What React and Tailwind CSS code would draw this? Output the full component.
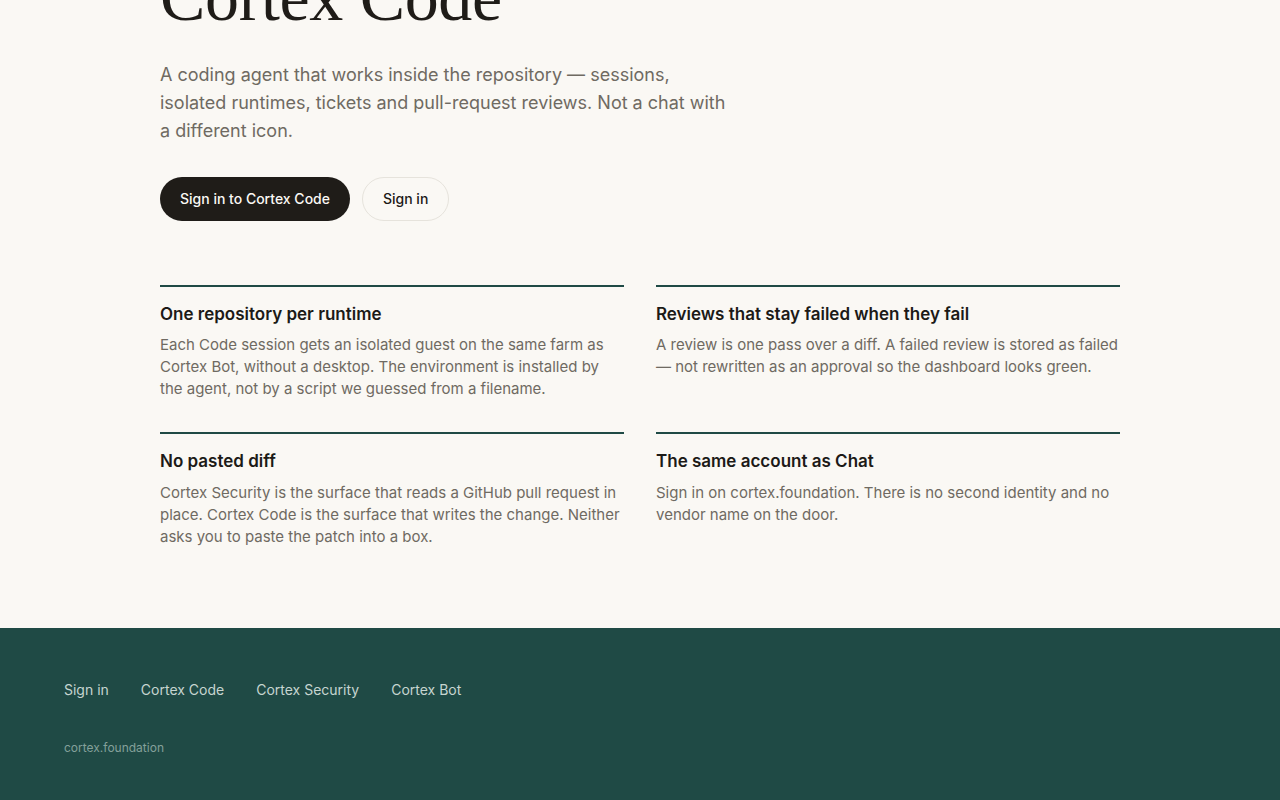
const features = [
  {
    title: "One repository per runtime",
    body: "Each Code session gets an isolated guest on the same farm as Cortex Bot, without a desktop. The environment is installed by the agent, not by a script we guessed from a filename.",
  },
  {
    title: "Reviews that stay failed when they fail",
    body: "A review is one pass over a diff. A failed review is stored as failed — not rewritten as an approval so the dashboard looks green.",
  },
  {
    title: "No pasted diff",
    body: "Cortex Security is the surface that reads a GitHub pull request in place. Cortex Code is the surface that writes the change. Neither asks you to paste the patch into a box.",
  },
  {
    title: "The same account as Chat",
    body: "Sign in on cortex.foundation. There is no second identity and no vendor name on the door.",
  },
];

const links = ["Sign in", "Cortex Code", "Cortex Security", "Cortex Bot"];

export default function App() {
  return (
    <div className="h-screen overflow-hidden flex flex-col justify-end bg-[#faf8f4] font-['Inter',sans-serif] text-[#1c1a17]">
      <main className="shrink-0 w-[960px] mx-auto pb-20">
        <h1 className="font-['Liberation_Serif',serif] text-[68px] leading-[70px] font-normal tracking-[-0.005em] text-[#1f1c18] mb-[29px]">
          Cortex Code
        </h1>
        <p className="w-[580px] text-lg leading-7 text-[#6f6a62]">
          A coding agent that works inside the repository — sessions, isolated runtimes, tickets and pull-request reviews. Not a chat with a different icon.
        </p>
        <div className="flex gap-3 mt-8">
          <a className="h-11 px-5 flex items-center rounded-full bg-[#1f1c18] text-[#faf8f4] text-sm font-medium">
            Sign in to Cortex Code
          </a>
          <a className="h-11 px-5 flex items-center rounded-full border border-[#e6e3dc] text-sm font-medium">
            Sign in
          </a>
        </div>
        <div className="grid grid-cols-2 gap-8 mt-16">
          {features.map((f) => (
            <section key={f.title} className="border-t-2 border-[#1f4a45] pt-4">
              <h2 className="text-[17px] leading-[1.3] font-semibold mb-[9.5px]">{f.title}</h2>
              <p className="text-[15px] leading-[22px] text-[#6f6a62]">{f.body}</p>
            </section>
          ))}
        </div>
      </main>
      <footer className="shrink-0 h-[172px] bg-[#1f4a45] px-16 pt-[52px]">
        <nav className="flex gap-8 text-sm leading-5 text-[#c6d5d0]">
          {links.map((l) => (
            <a key={l}>{l}</a>
          ))}
        </nav>
        <p className="mt-10 text-xs leading-4 text-[#84a09a]">cortex.foundation</p>
      </footer>
    </div>
  );
}
